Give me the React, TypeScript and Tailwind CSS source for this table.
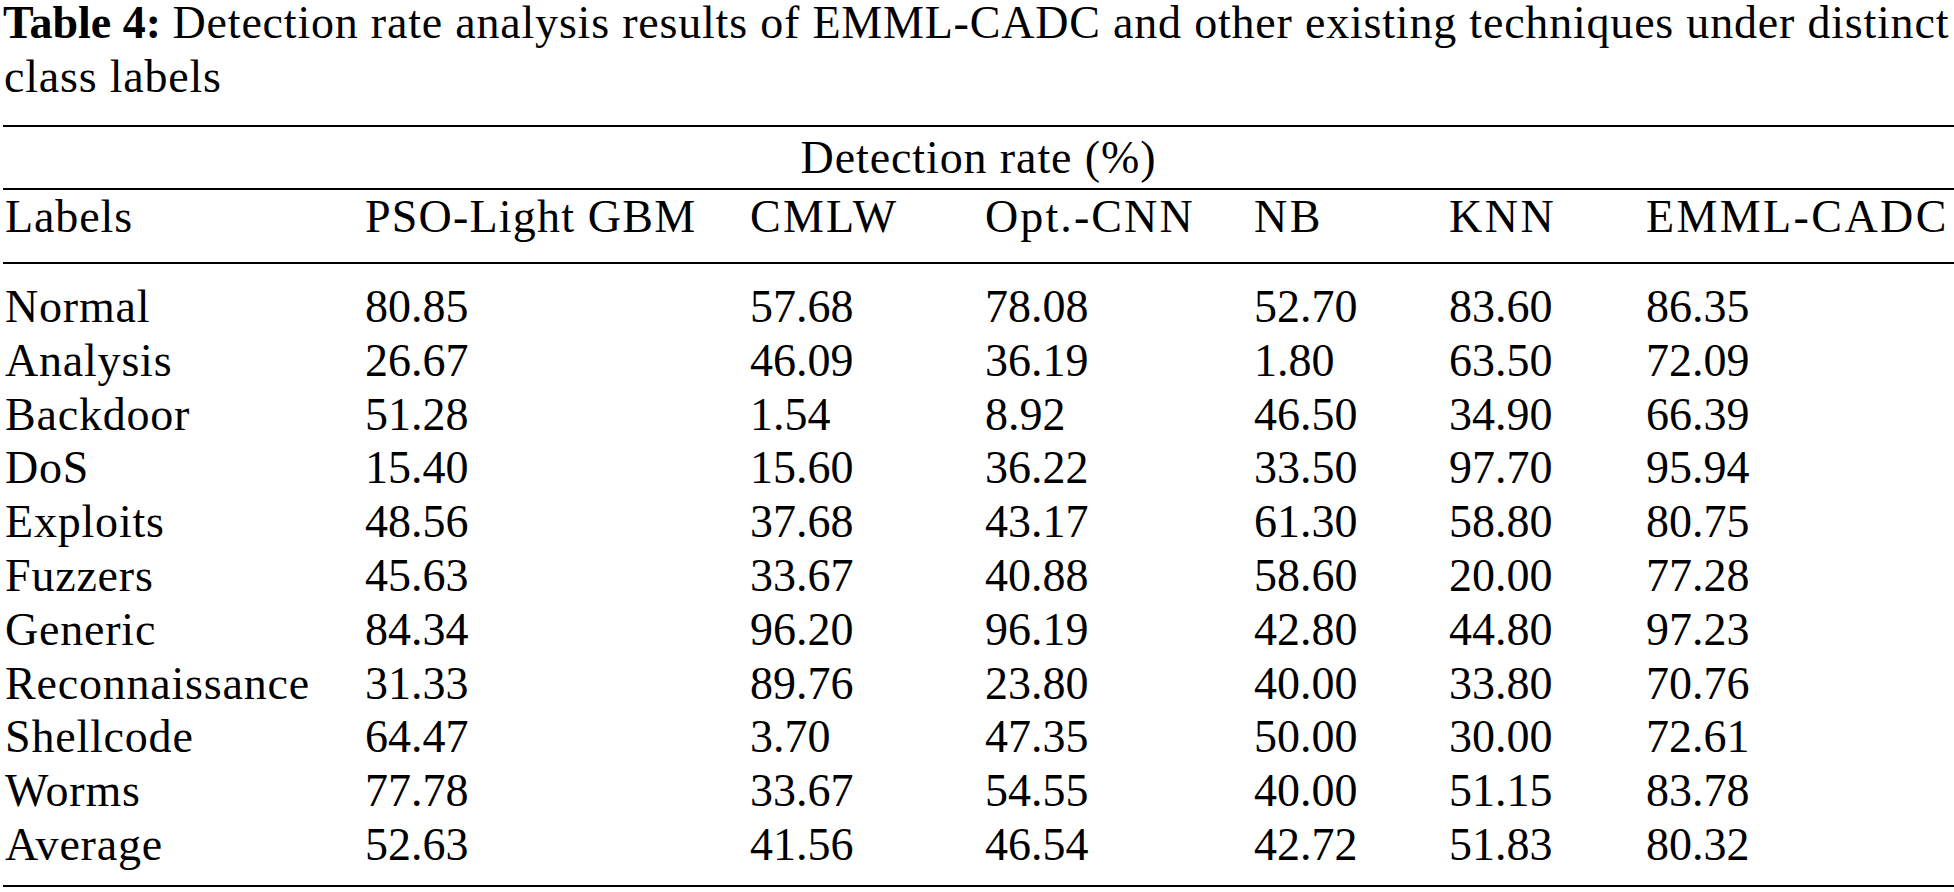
const rows: [string, string, string, string, string, string, string][] = [
  ['Normal', '80.85', '57.68', '78.08', '52.70', '83.60', '86.35'],
  ['Analysis', '26.67', '46.09', '36.19', '1.80', '63.50', '72.09'],
  ['Backdoor', '51.28', '1.54', '8.92', '46.50', '34.90', '66.39'],
  ['DoS', '15.40', '15.60', '36.22', '33.50', '97.70', '95.94'],
  ['Exploits', '48.56', '37.68', '43.17', '61.30', '58.80', '80.75'],
  ['Fuzzers', '45.63', '33.67', '40.88', '58.60', '20.00', '77.28'],
  ['Generic', '84.34', '96.20', '96.19', '42.80', '44.80', '97.23'],
  ['Reconnaissance', '31.33', '89.76', '23.80', '40.00', '33.80', '70.76'],
  ['Shellcode', '64.47', '3.70', '47.35', '50.00', '30.00', '72.61'],
  ['Worms', '77.78', '33.67', '54.55', '40.00', '51.15', '83.78'],
  ['Average', '52.63', '41.56', '46.54', '42.72', '51.83', '80.32'],
];

// header labels, with the letter spacing each needs to match the source typesetting
const headers = [
  { label: 'Labels', cls: 'tracking-[0.9px]' },
  { label: 'PSO-Light GBM', cls: 'tracking-[1.2px]' },
  { label: 'CMLW', cls: 'tracking-[2.2px]' },
  { label: 'Opt.-CNN', cls: 'tracking-[2.1px]' },
  { label: 'NB', cls: 'tracking-[2.5px]' },
  { label: 'KNN', cls: 'tracking-[2.5px]' },
  { label: 'EMML-CADC', cls: 'tracking-[2.4px]' },
];

// shared column template so every row lines up
const cols = 'grid grid-cols-[360px_385px_235px_269px_195px_197px_1fr] pl-[2px]';

export default function App() {
  return (
    <div className="min-h-screen w-full bg-white pl-[3px] font-['Liberation_Serif','Times_New_Roman',serif] text-black">
      {/* Caption */}
      <div className="mt-[-4px] text-[46px] leading-[54px]">
        <p className="whitespace-nowrap">
          <span className="font-bold">Table 4:</span>{' '}
          <span className="tracking-[0.8px]">
            Detection rate analysis results of EMML-CADC and other existing techniques under distinct
          </span>
        </p>
        <p className="pl-[1px] tracking-[0.8px]">class labels</p>
      </div>

      {/* Table */}
      <div className="mt-[21px] border-t-2 border-black text-[46px]">
        <div className="pt-[4px] pb-[3px] text-center leading-[54px] tracking-[0.9px]">Detection rate (%)</div>
        <div className={`${cols} border-t-2 border-black pb-[18px] leading-[54px]`}>
          {headers.map(h => (
            <div key={h.label} className={`whitespace-nowrap ${h.cls}`}>
              {h.label}
            </div>
          ))}
        </div>
        <div className="border-t-2 border-b-2 border-black pt-[16px] pb-[13px]">
          {rows.map(r => (
            <div key={r[0]} className={`${cols} leading-[53.8px]`}>
              {r.map((cell, i) => (
                <div key={i} className={`whitespace-nowrap ${i === 0 ? 'tracking-[0.8px]' : ''}`}>
                  {cell}
                </div>
              ))}
            </div>
          ))}
        </div>
      </div>
    </div>
  );
}
